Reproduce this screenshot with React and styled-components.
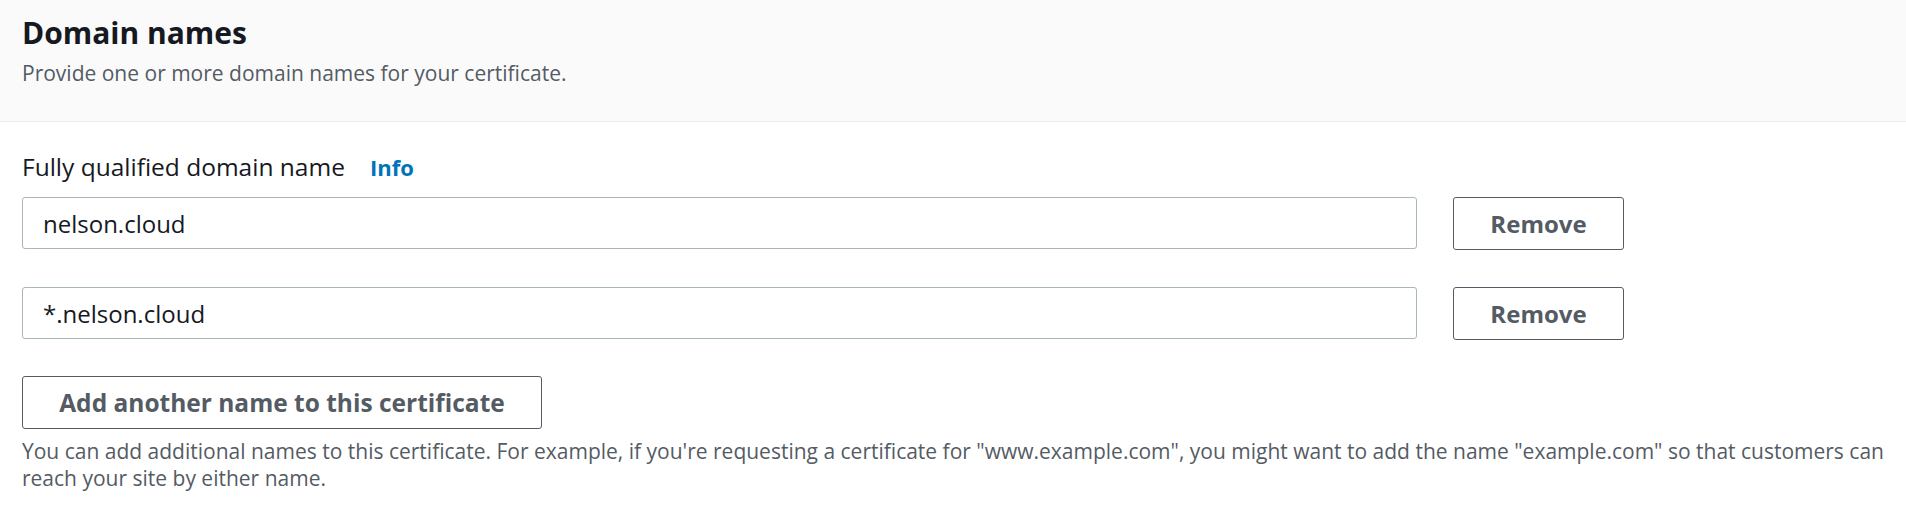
import React from 'react'
import styled, { createGlobalStyle } from 'styled-components'

const GlobalStyle = createGlobalStyle`
  body {
    margin: 0;
    background: #ffffff;
    font-family: "Open Sans", "Noto Sans", sans-serif;
    color: #16191f;
  }
`

const Container = styled.section`
  width: 100%;
  background: #ffffff;
`

const Header = styled.header`
  background: #fafafa;
  border-bottom: 1px solid #eaeded;
  padding: 15px 22px 0;
  height: 106px;
`

const Title = styled.h2`
  margin: 0;
  font-size: 30px;
  line-height: 36px;
  font-weight: 700;
  color: #16191f;
`

const Description = styled.p`
  margin: 8px 0 0;
  font-size: 21px;
  line-height: 28px;
  color: #545b64;
`

const Body = styled.div`
  padding: 30px 22px 0;
`

const LabelRow = styled.div`
  display: flex;
  align-items: baseline;
  gap: 25px;
  margin-bottom: 15px;
`

const Label = styled.label`
  font-size: 24.5px;
  line-height: 30px;
  color: #16191f;
`

const InfoLink = styled.a`
  font-size: 22px;
  font-weight: 700;
  color: #0073bb;
  text-decoration: none;
`

const Rows = styled.div`
  display: flex;
  flex-direction: column;
  gap: 37px;
`

const Row = styled.div`
  display: flex;
  align-items: flex-start;
  gap: 36px;
`

const Input = styled.input`
  box-sizing: border-box;
  width: 1395px;
  height: 52px;
  padding: 0 20px;
  border: 1px solid #aab7b8;
  border-radius: 3px;
  font-family: inherit;
  font-size: 24px;
  color: #16191f;
  background: #ffffff;
  outline: none;
`

const Button = styled.button`
  box-sizing: border-box;
  width: ${p => p.$width}px;
  height: 53px;
  padding: 0;
  border: 1px solid #545b64;
  border-radius: 3px;
  background: #ffffff;
  color: #545b64;
  font-family: inherit;
  font-size: ${p => p.$size}px;
  font-weight: 700;
  cursor: pointer;
`

const AddRow = styled.div`
  margin-top: 36px;
`

const Help = styled.p`
  margin: 9px 0 0;
  font-size: 21px;
  line-height: 27px;
  color: #545b64;
`

const domains = ['nelson.cloud', '*.nelson.cloud']

export default function App() {
  return (
    <Container>
      <GlobalStyle />
      <Header>
        <Title>Domain names</Title>
        <Description>Provide one or more domain names for your certificate.</Description>
      </Header>
      <Body>
        <LabelRow>
          <Label>Fully qualified domain name</Label>
          <InfoLink href="#">Info</InfoLink>
        </LabelRow>
        <Rows>
          {domains.map(d => (
            <Row key={d}>
              <Input defaultValue={d} />
              <Button $width={171} $size={24}>Remove</Button>
            </Row>
          ))}
        </Rows>
        <AddRow>
          <Button $width={520} $size={24.5}>Add another name to this certificate</Button>
        </AddRow>
        <Help>
          You can add additional names to this certificate. For example, if you're requesting a certificate for "www.example.com", you might want to add the name "example.com" so that customers can reach your site by either name.
        </Help>
      </Body>
    </Container>
  )
}
